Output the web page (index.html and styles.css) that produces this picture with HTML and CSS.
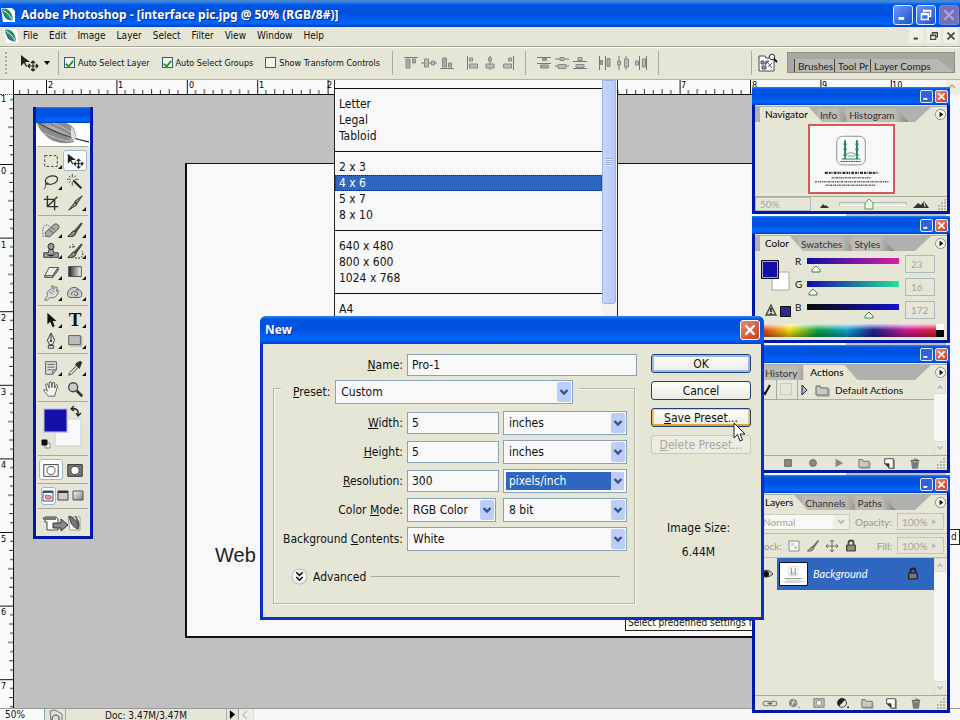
FILE: index.html
```html
<!DOCTYPE html>
<html lang="en">
<head>
<meta charset="utf-8">
<title>Adobe Photoshop</title>
<link rel="stylesheet" href="styles.css">
</head>
<body>
<svg class="defs" aria-hidden="true">
  <defs>
    <linearGradient id="gMetal" x1="0" y1="0" x2="1" y2="1"><stop offset="0" stop-color="#fff"/><stop offset="1" stop-color="#777"/></linearGradient>
    <linearGradient id="gBw"><stop offset="0" stop-color="#222"/><stop offset="1" stop-color="#fff"/></linearGradient>
    <symbol id="min" viewBox="0 0 14 14"><path d="M3 10h5" stroke="currentColor" stroke-width="2.4"/></symbol>
    <symbol id="max" viewBox="0 0 14 14"><path d="M5 5V3h6v5H9M5 3.4h6M3 6h6v5H3zM3 6.6h6" fill="none" stroke="currentColor" stroke-width="1.3"/></symbol>
    <symbol id="close" viewBox="0 0 14 14"><path d="M3 3l8 8M11 3l-8 8" stroke="currentColor" stroke-width="2"/></symbol>
    <symbol id="feather" viewBox="0 0 16 16"><path d="M1 1h11l3 3v11H3z" fill="#fff"/><path d="M2 2c6-2 11 4 11 12C7 13 3 8 2 2z" fill="#2a8d7c"/><path d="M2 2c1 5 4 9 9 11-6 0-8-5-9-11z" fill="#153f86"/><path d="M3 3c5 3 8 7 10 11" stroke="#d4f5cc" fill="none"/></symbol>
    <symbol id="move" viewBox="0 0 20 20"><path d="M2 2v11l3-3 2 4 1-1-2-4h5z" fill="#222"/><path d="M14 8v10M9 13h10M12 10l2-2 2 2M12 16l2 2 2-2M11 11l-2 2 2 2M17 11l2 2-2 2" stroke="#222" stroke-width="1.2" fill="none"/></symbol>
    <symbol id="brush" viewBox="0 0 20 20"><path d="M17 2l-8 9 2 2 7-10z" fill="#555" stroke="#222" stroke-width=".7"/><path d="M9 11c-3 0-3 4-7 6 4 1 9 0 9-4z" fill="#888" stroke="#222"/></symbol>
    <symbol id="folder" viewBox="0 0 16 14"><path d="M2 3h4l1 2h7v7H2z" fill="#c9c9c3" stroke="#666"/><path d="M3 13h12V6" stroke="#888" fill="none"/></symbol>
    <symbol id="newpage" viewBox="0 0 16 14"><path d="M3 2h10v11H8V8H3z" fill="#fff" stroke="#333"/><path d="M3 8h5v5z" fill="#333"/><path d="M14 3v11H9" stroke="#555" fill="none"/></symbol>
    <symbol id="trash" viewBox="0 0 16 14"><path d="M4 4h8l-1 9H5z" fill="#aaa" stroke="#555"/><path d="M3 4h10M7 2l4 1M6 6l1 6M8 6v6M10 6l-1 6" stroke="#555" fill="none"/></symbol>
    <symbol id="play" viewBox="0 0 14 14"><circle cx="7" cy="7" r="5.5" fill="#f4f4ee" stroke="#888"/><path d="M6 4l4 3-4 3z" fill="#111"/></symbol>
    <symbol id="up" viewBox="0 0 12 12"><path d="M3 8l3-3 3 3" fill="none" stroke="#b9b9b0" stroke-width="1.8"/></symbol>
    <symbol id="down" viewBox="0 0 12 12"><path d="M3 4l3 3 3-3" fill="none" stroke="#b9b9b0" stroke-width="1.8"/></symbol>
    <symbol id="grip" viewBox="0 0 12 12"><path d="M9 2h2M6 5h2M9 5h2M3 8h2M6 8h2M9 8h2M3 11h2M6 11h2M9 11h2" stroke="#aaa99b" stroke-width="1.5"/></symbol>
    <symbol id="lock" viewBox="0 0 12 14"><path d="M3.5 7V4a2.5 2.500 0 0 1 5 0v3" fill="none" stroke="#222" stroke-width="1.8"/><path d="M1.500 6h9v6h-9z" fill="#555" stroke="#222"/><path d="M3 8h6M3 10h6" stroke="#bbb" stroke-width=".7"/></symbol>
    <symbol id="mosque" viewBox="0 0 84 64">
      <rect x="27" y="9" width="29" height="29" rx="6" fill="none" stroke="#777" stroke-width=".8"/>
      <path d="M35.500 13v19M47.500 13v19" stroke="#2a8066" stroke-width="2"/><path d="M33.500 17h4M33.500 22h4M33.500 28h4M45.500 17h4M45.500 22h4M45.500 28h4M32 32h19" stroke="#2a8066"/>
      <path d="M35 31c1-7 12-7 13 0M38 29h7" fill="none" stroke="#69a18f"/><path d="M31 34.500h21" stroke="#444" stroke-dasharray="2 .6"/>
      <path d="M15 46h54" stroke="#333" stroke-width="2.4" stroke-dasharray="3 1 2 .7 1 1.200"/>
      <path d="M22 51h40M5 55h75M16 58.500h50" stroke="#666" stroke-width="1.4" stroke-dasharray="2 .8 1 .6"/>
    </symbol>
    <symbol id="al1" viewBox="0 0 16 14"><path d="M1 1.500h14" stroke="#777"/><path d="M3 3h4v9H3zM9.500 3h3v4h-3z" fill="#aaa" stroke="#888"/></symbol>
    <symbol id="al2" viewBox="0 0 16 14"><path d="M0 7h16" stroke="#777"/><path d="M3.500 3h4v8h-4zM10.500 5h3v4h-3z" fill="#bbb" stroke="#888"/></symbol>
    <symbol id="al3" viewBox="0 0 16 14"><path d="M1 12.500h14" stroke="#777"/><path d="M3.500 2h4v9h-4zM9.500 7h3v4h-3z" fill="#aaa" stroke="#888"/></symbol>
    <symbol id="al4" viewBox="0 0 16 14"><path d="M3.500 0v14" stroke="#777"/><path d="M5.500 2h3v3h-3zM5.500 8h8v4h-8z" fill="#bbb" stroke="#888"/></symbol>
    <symbol id="al5" viewBox="0 0 16 14"><path d="M8 0v14" stroke="#777"/><path d="M6.500 2h3v3h-3zM4 8h8v4H4z" fill="#bbb" stroke="#888"/></symbol>
    <symbol id="al6" viewBox="0 0 16 14"><path d="M13.500 0v14" stroke="#777"/><path d="M8.500 2h3v3h-3zM3.500 8h8v4h-8z" fill="#bbb" stroke="#888"/></symbol>
    <symbol id="di1" viewBox="0 0 16 14"><path d="M1 1.500h14M1 7.500h14" stroke="#777"/><path d="M6.500 2.500h4v2h-4zM4.500 9h8v3h-8z" fill="#aaa" stroke="#888"/></symbol>
    <symbol id="di2" viewBox="0 0 16 14"><path d="M1 3h14M1 10h14" stroke="#777"/><path d="M6 1.500h4v3H6zM4 8.500h8v4H4z" fill="#bbb" stroke="#888"/></symbol>
    <symbol id="di3" viewBox="0 0 16 14"><path d="M1 5.500h14M1 12.500h14" stroke="#777"/><path d="M6 1.500h4v3H6zM4 8.500h8v3H4z" fill="#bbb" stroke="#888"/></symbol>
  </defs>
</svg>

<header class="titlebar">
  <svg class="i16"><use href="#feather"/></svg>
  <h1>Adobe Photoshop - [interface pic.jpg @ 50% (RGB/8#)]</h1>
  <div class="winbtns">
    <button aria-label="Minimize"><svg><use href="#min"/></svg></button>
    <button aria-label="Restore"><svg><use href="#max"/></svg></button>
    <button class="off" aria-label="Close"><svg><use href="#close"/></svg></button>
  </div>
</header>

<nav class="menubar">
  <svg class="i16"><use href="#feather"/></svg>
  <a href="#">File</a><a href="#">Edit</a><a href="#">Image</a><a href="#">Layer</a><a href="#">Select</a><a href="#">Filter</a><a href="#">View</a><a href="#">Window</a><a href="#">Help</a>
  <div class="docbtns">
    <button aria-label="Minimize document"><svg><use href="#min"/></svg></button>
    <button aria-label="Restore document"><svg><use href="#max"/></svg></button>
    <button aria-label="Close document"><svg><use href="#close"/></svg></button>
  </div>
</nav>

<div class="options">
  <span class="handle"></span>
  <button class="current" aria-label="Move tool"><svg class="i20"><use href="#move"/></svg><svg class="caret" viewBox="0 0 6 4"><path d="M0 0h6L3 4z"/></svg></button>
  <div class="checks">
    <label><input type="checkbox" checked>Auto Select Layer</label>
    <label><input type="checkbox" checked>Auto Select Groups</label>
    <label><input type="checkbox">Show Transform Controls</label>
  </div>
  <div class="aligns">
    <span><svg><use href="#al1"/></svg><svg><use href="#al2"/></svg><svg><use href="#al3"/></svg></span>
    <span><svg><use href="#al4"/></svg><svg><use href="#al5"/></svg><svg><use href="#al6"/></svg></span>
  </div>
  <div class="aligns">
    <span><svg><use href="#di1"/></svg><svg><use href="#di2"/></svg><svg><use href="#di3"/></svg></span>
    <span class="turn"><svg><use href="#di1"/></svg><svg><use href="#di2"/></svg><svg><use href="#di3"/></svg></span>
  </div>
  <span class="rule"></span>
  <div class="well">
    <button aria-label="File browser"><svg class="i20" viewBox="0 0 20 20"><path d="M1 3h6l1 2h8v13H1z" fill="#fff" stroke="#444"/><path d="M3 8h3v3H3zM8 8h3l-4 4zM4 13h4v3H4zM10 14l4-4M10 10l4 5" fill="#999" stroke="#555"/><circle cx="14" cy="4" r="2.800" fill="#eee" stroke="#333"/><path d="M16 6l3 3" stroke="#111" stroke-width="2"/></svg></button>
    <div class="welltabs"><a href="#">Brushes</a><a href="#">Tool Pr</a><a href="#">Layer Comps</a></div>
  </div>
</div>

<main class="work">
  <div class="corner"></div>
  <svg class="hruler">
    <defs><pattern id="ph" x="32" width="70.400" height="14" patternUnits="userSpaceOnUse"><path d="M.5 0v14" stroke="#111"/><path d="M8.800 10v4M17.600 9v5M26.400 10v4M35.200 9v5M44 10v4M52.800 9v5M61.600 10v4" stroke="#333"/></pattern></defs>
    <rect width="100%" height="14" fill="url(#ph)"/>
    <g><text x="34" y="8">2</text><text x="104" y="8">1</text><text x="175" y="8">0</text><text x="245" y="8">1</text><text x="313" y="8">2</text><text x="667" y="8">7</text><text x="738" y="8">8</text><text x="808" y="8">9</text><text x="878" y="8">10</text></g>
  </svg>
  <div class="scrollcap"><svg class="i12"><use href="#up"/></svg></div>
  <svg class="vruler">
    <defs><pattern id="pv" y="69" width="13" height="73.600" patternUnits="userSpaceOnUse"><path d="M0 .5h13" stroke="#111"/><path d="M10 9.200h3M9 18.400h4M10 27.600h3M8 36.800h5M10 46h3M9 55.200h4M10 64.400h3" stroke="#333"/></pattern></defs>
    <rect width="13" height="100%" fill="url(#pv)"/>
    <g><text x="1" y="7">1</text><text x="1" y="79">0</text><text x="1" y="153">1</text><text x="1" y="226">2</text><text x="1" y="300">3</text><text x="1" y="373">4</text><text x="1" y="447">5</text><text x="1" y="520">6</text><text x="1" y="594">7</text></g>
  </svg>
  <div class="canvas"><div class="sheet"><p>Web</p></div></div>
  <div class="vtrack"></div>
</main>

<footer class="status">
  <input aria-label="Zoom" value="50%">
  <span class="st-ico"><svg class="i14" viewBox="0 0 14 14"><path d="M1 2l5-1 7 4v8H2z" fill="#ddd" stroke="#777"/><path d="M3 11c0-6 5-6 7-3v4" fill="none" stroke="#444"/></svg></span>
  <span class="st-doc">Doc: 3.47M/3.47M</span>
  <button class="st-btn" aria-label="Status menu"><svg viewBox="0 0 8 10"><path d="M1 0l6 5-6 5z"/></svg></button>
  <span class="st-left"><svg class="i12" viewBox="0 0 12 12"><path d="M8 2L4 6l4 4" fill="none" stroke="#c3c3bb" stroke-width="1.600"/></svg></span>
</footer>

<aside class="toolbox" aria-label="Tools">
  <div class="bar"></div>
  <svg class="plume" viewBox="0 0 54 23"><path d="M1 0h29c6 2 9 6 10 12l-2 7c-11 3-22 0-28-6C6 9 2 5 1 0z" fill="#8c8c8c"/><path d="M4 1c12 4 22 8 32 16M10 1c9 4 18 8 27 14M17 0c8 3 14 6 21 12M8 10c9 4 18 8 28 8" stroke="#c4c4c4" fill="none"/><path d="M3 0c13 9 28 14 50 19" stroke="#444" fill="none" stroke-width="1.300"/><path d="M35 4c4 3 6 10 3 15l-3-5z" fill="#ddd"/></svg>
  <div class="tools">
    <button class="more" aria-label="Marquee"><svg viewBox="0 0 20 20"><path d="M3 4h14v12H3z" fill="none" stroke="#333" stroke-dasharray="3 2"/></svg></button>
    <button class="on" aria-label="Move"><svg><use href="#move"/></svg></button>
    <button class="more" aria-label="Lasso"><svg viewBox="0 0 20 20"><ellipse cx="10.500" cy="8" rx="7" ry="4.500" transform="rotate(-15 10 8)" fill="none" stroke="#333" stroke-width="1.300"/><path d="M5 10c-3 2 1 4 2 2s-4-1-3 2c0 2-1 3-2 4" fill="none" stroke="#333"/></svg></button>
    <button aria-label="Magic wand"><svg viewBox="0 0 20 20"><path d="M8 8l9 9" stroke="#222" stroke-width="2.200"/><path d="M7 1v4M7 10v4M1 7h4M10 7h4M3 3l2 2M11 3L9 5M3 11l2-2" stroke="#444"/></svg></button>
    <button aria-label="Crop"><svg viewBox="0 0 20 20"><path d="M6 2v12h12M2 6h12v12M14 6L6 14M14 6l3-3" fill="none" stroke="#333" stroke-width="1.600"/></svg></button>
    <button class="more" aria-label="Slice"><svg viewBox="0 0 20 20"><path d="M18 2l-8 6 2 3zM10 9l2 3-9 6z" fill="#999" stroke="#222"/></svg></button>
  </div>
  <div class="tools">
    <button class="more" aria-label="Healing brush"><svg viewBox="0 0 20 20"><path d="M1 9c0-5 6-6 7-3M1 10v7h5" fill="none" stroke="#444" stroke-dasharray="1.500 1.500"/><rect x="2" y="7" width="18" height="7" rx="3.500" transform="rotate(-42 11 10)" fill="#aaa" stroke="#555"/><path d="M8 10l4 3M11 7l3 3" stroke="#555"/></svg></button>
    <button class="more" aria-label="Brush"><svg><use href="#brush"/></svg></button>
    <button class="more" aria-label="Clone stamp"><svg viewBox="0 0 20 20"><path d="M8 8h4l1 4h5v5H2v-5h5z" fill="#aaa" stroke="#222"/><circle cx="10" cy="5" r="3.400" fill="#999" stroke="#222"/><path d="M4 14h12l-6 2z" fill="#222"/></svg></button>
    <button class="more" aria-label="History brush"><svg><use href="#brush"/><path d="M3 5h6l-3-3M9 16h5c4-2 3-6 2-7" fill="none" stroke="#333" stroke-dasharray="2 1"/></svg></button>
    <button class="more" aria-label="Eraser"><svg viewBox="0 0 20 20"><path d="M8 5h10l-6 9H3z" fill="#eee" stroke="#444"/><path d="M3 14v2h9v-2l6-9v3l-6 8" fill="#aaa" stroke="#444"/></svg></button>
    <button class="more" aria-label="Gradient"><svg viewBox="0 0 20 20"><path d="M3 4h14v11H3z" fill="url(#gBw)" stroke="#444"/></svg></button>
    <button class="more" aria-label="Smudge"><svg viewBox="0 0 20 20"><path d="M3 18l3-5c-1-3 0-5 2-6l3-2V2l2 .5V6l2-3 2 1-1 4 2-1v3l-2 3c-1 2-4 3-7 2l-3 3z" fill="#ddd" stroke="#666"/><path d="M8 9l4 2M11 7l3 2" stroke="#777"/></svg></button>
    <button class="more" aria-label="Sponge"><svg viewBox="0 0 20 20"><path d="M2 9c2-6 10-7 13-2 4 1 3 8 0 8H5c-3 0-4-3-3-6z" fill="#ccc" stroke="#555"/><path d="M6 12c0-5 7-5 7-1s-6 1-3 0M14 7l-3-1" fill="none" stroke="#555"/></svg></button>
  </div>
  <div class="tools">
    <button class="more" aria-label="Path selection"><svg viewBox="0 0 20 20"><path d="M6 2v13l3-3 3 6 2-1-2-6h4z" fill="#111"/></svg></button>
    <button class="more type" aria-label="Type">T</button>
    <button class="more" aria-label="Pen"><svg viewBox="0 0 20 20"><path d="M10 1l4 8-2 5H8L6 9zM7 15h6v3H7z" fill="#ddd" stroke="#333"/><path d="M10 2v7" stroke="#333"/><circle cx="10" cy="10" r="1.200" fill="#222"/></svg></button>
    <button class="more" aria-label="Rectangle"><svg viewBox="0 0 20 20"><path d="M3 4h13v10H3z" fill="#bbb" stroke="#555"/><path d="M4 15.500h13.500V5" fill="none" stroke="#999"/></svg></button>
  </div>
  <div class="tools">
    <button class="more" aria-label="Notes"><svg viewBox="0 0 20 20"><path d="M4 3h12v9l-4 5H4z" fill="#ddd" stroke="#555"/><path d="M6 6h8M6 9h8M6 12h5M12 17v-5h4" fill="none" stroke="#555"/></svg></button>
    <button class="more" aria-label="Eyedropper"><svg viewBox="0 0 20 20"><path d="M3 18l1-3 8-8 2 2-8 8z" fill="#ddd" stroke="#444"/><path d="M10 6l5 5 1-2 2-5-2-2-4 2z" fill="#333"/></svg></button>
    <button aria-label="Hand"><svg viewBox="0 0 20 20"><path d="M7 18c-2-3-5-5-5-7l2-.5 2 2L4 5l2-1 2 5V2.500l2-.5 1 6.500 1-6 2 .5v6l2-4 1.500 1-2 7-1.500 5z" fill="#f2f2f2" stroke="#555"/></svg></button>
    <button aria-label="Zoom"><svg viewBox="0 0 20 20"><circle cx="8" cy="8" r="5" fill="#ccc" stroke="#444" stroke-width="1.500"/><path d="M12 12l6 6" stroke="#333" stroke-width="3"/></svg></button>
  </div>
  <div class="swatches">
    <svg viewBox="0 0 50 50"><path d="M17 17h26v27H17z" fill="#f8f8f8" stroke="#ccc"/><path d="M5 6h25v25H5z" fill="#c9c9f0"/><path d="M6.500 7.500h22v22h-22z" fill="#140fa6"/><path d="M34 7c4-1 7 1 6 6M36 4l-3 3 3 2M38 11l2 3 3-3" fill="none" stroke="#222" stroke-width="1.300"/><path d="M7 41h5v5H7z" fill="#fff" stroke="#888"/><path d="M4 38h5v5H4z" fill="#111" stroke="#111"/></svg>
  </div>
  <div class="tools modes">
    <button class="on" aria-label="Standard mode"><svg viewBox="0 0 20 20"><path d="M2 4h16v13H2z" fill="#fff" stroke="#333"/><circle cx="10" cy="10.500" r="4.500" fill="#fff" stroke="#444"/></svg></button>
    <button aria-label="Quick mask mode"><svg viewBox="0 0 20 20"><path d="M2 4h16v13H2z" fill="#777" stroke="#222"/><circle cx="10" cy="10.500" r="4.500" fill="#fff" stroke="#444"/></svg></button>
  </div>
  <div class="tools screens">
    <button class="on" aria-label="Standard screen"><svg viewBox="0 0 14 14"><path d="M2 2h10v10H2z" fill="#fff" stroke="#357"/><path d="M2 3h10" stroke="#357" stroke-width="2"/><path d="M4 6l6 1v3H5z" fill="#e99" stroke="#a66"/></svg></button>
    <button aria-label="Full screen with menu"><svg viewBox="0 0 14 14"><path d="M2 2h10v9H2z" fill="#ccc" stroke="#444"/><path d="M2 3h10" stroke="#333" stroke-width="2"/></svg></button>
    <button aria-label="Full screen"><svg viewBox="0 0 14 14"><path d="M2 2h10v9H2z" fill="url(#gMetal)" stroke="#555"/></svg></button>
  </div>
  <button class="jump" aria-label="Edit in ImageReady"><svg viewBox="0 0 42 18"><path d="M3 3h11l2 2v11H5V8H3z" fill="#fff" stroke="#444"/><path d="M1 3h13v3H1z" fill="#777"/><path d="M11 9h8V5l7 6-7 6v-3h-8z" fill="#888" stroke="#333"/><path d="M26 3h12v13H28z" fill="#fff" stroke="#999"/><path d="M27 2c6 2 10 7 9 13-6-2-8-7-9-13zM33 2c4 4 5 9 3 13" fill="#777" stroke="#444"/></svg></button>
</aside>

<div class="palettes">
  <section class="pal nav">
    <div class="bar"><button aria-label="Minimize"><svg><use href="#min"/></svg></button><button class="red" aria-label="Close"><svg><use href="#close"/></svg></button></div>
    <div class="tabs"><a class="act" href="#">Navigator</a><a href="#">Info</a><a href="#">Histogram</a><i class="ear"><svg><use href="#play"/></svg></i></div>
    <div class="navview"><svg viewBox="0 0 84 64"><use href="#mosque"/></svg></div>
    <div class="navfoot"><input aria-label="Navigator zoom" value="50%">
      <svg class="hills" viewBox="0 0 16 10"><path d="M3 9l3-4 2 2 1-1 3 3z" fill="#333"/></svg>
      <span class="track"><svg viewBox="0 0 10 12"><path d="M1 11V5l4-4 4 4v6z" fill="#eef7ea" stroke="#5a9468"/></svg></span>
      <svg class="hills" viewBox="0 0 16 10"><path d="M0 9l5-5 3 2 3-4 5 7z" fill="#333"/><path d="M11 3l1 5" stroke="#eee"/></svg>
      <svg class="i12"><use href="#grip"/></svg></div>
  </section>

  <section class="pal color">
    <div class="bar"><button aria-label="Minimize"><svg><use href="#min"/></svg></button><button class="red" aria-label="Close"><svg><use href="#close"/></svg></button></div>
    <div class="tabs"><a class="act" href="#">Color</a><a href="#">Swatches</a><a href="#">Styles</a><i class="ear"><svg><use href="#play"/></svg></i></div>
    <div class="colorbody">
      <svg class="chips" viewBox="0 0 40 66"><path d="M17 17h17v18H17z" fill="#fff" stroke="#aaa"/><path d="M6.500 5.500h17v18h-17z" fill="#140fa6" stroke="#111"/><path d="M7.500 6.500h15v16h-15z" fill="none" stroke="#aab"/><path d="M16 50l5 10H11z" fill="#ccc" stroke="#444" stroke-width="1.300"/><path d="M16 53v4M16 58v1.500" stroke="#111" stroke-width="1.500"/><path d="M25.500 51.500h10v10h-10z" fill="#2c2c86" stroke="#111"/></svg>
      <div class="sliders">
        <label>R<span class="ramp r"><svg viewBox="0 0 10 8"><path d="M1 7V5l4-4 4 4v2z" fill="#fff" stroke="#3a7d4a"/></svg></span><input value="23"></label>
        <label>G<span class="ramp g"><svg viewBox="0 0 10 8"><path d="M1 7V5l4-4 4 4v2z" fill="#fff" stroke="#3a7d4a"/></svg></span><input value="16"></label>
        <label>B<span class="ramp b"><svg viewBox="0 0 10 8"><path d="M1 7V5l4-4 4 4v2z" fill="#fff" stroke="#3a7d4a"/></svg></span><input value="172"></label>
      </div>
    </div>
    <div class="spectrum"><i></i></div>
  </section>

  <section class="pal actions">
    <div class="bar"><button aria-label="Minimize"><svg><use href="#min"/></svg></button><button class="red" aria-label="Close"><svg><use href="#close"/></svg></button></div>
    <div class="tabs"><a href="#">History</a><a class="act" href="#">Actions</a><i class="ear"><svg><use href="#play"/></svg></i></div>
    <div class="scrollbox">
      <div class="actrow">
        <span class="tick"><svg class="i14" viewBox="0 0 14 14"><path d="M3 7l3 4 5-9" fill="none" stroke="#111" stroke-width="2"/></svg></span>
        <span class="box"><i></i></span>
        <svg class="tri" viewBox="0 0 8 12"><path d="M1 1l5 5-5 5z" fill="#b3b3e8" stroke="#223"/></svg>
        <svg class="i16"><use href="#folder"/></svg><span>Default Actions</span>
      </div>
      <div class="sb"><svg><use href="#up"/></svg><svg><use href="#down"/></svg></div>
    </div>
    <div class="palfoot six">
      <svg viewBox="0 0 14 14"><path d="M3 3h8v8H3z" fill="#888" stroke="#666"/></svg><svg viewBox="0 0 14 14"><circle cx="7" cy="7" r="4" fill="#888" stroke="#666"/></svg><svg viewBox="0 0 14 14"><path d="M3 2l9 5-9 5z" fill="#888"/></svg><svg><use href="#folder"/></svg><svg><use href="#newpage"/></svg><svg><use href="#trash"/></svg><svg class="i12"><use href="#grip"/></svg>
    </div>
  </section>

  <section class="pal layers">
    <div class="bar"><button aria-label="Minimize"><svg><use href="#min"/></svg></button><button class="red" aria-label="Close"><svg><use href="#close"/></svg></button></div>
    <div class="tabs"><a class="act" href="#">Layers</a><a href="#">Channels</a><a href="#">Paths</a><i class="ear"><svg><use href="#play"/></svg></i></div>
    <div class="layrow"><select aria-label="Blend mode" disabled><option>Normal</option></select><label for="opacity">Opacity:</label><span class="pct"><input id="opacity" value="100%"><b></b></span></div>
    <div class="layrow"><span>Lock:</span>
      <svg class="i14" viewBox="0 0 14 14"><path d="M2 2h10v10H2z" fill="#fff" stroke="#777"/><path d="M4 4h3v3H4zM7 7h3v3H7z" fill="#ccc"/></svg>
      <svg class="i14"><use href="#brush"/></svg>
      <svg class="i14" viewBox="0 0 14 14"><path d="M7 1v12M1 7h12M5 3l2-2 2 2M5 11l2 2 2-2M3 5L1 7l2 2M11 5l2 2-2 2" fill="none" stroke="#555"/></svg>
      <svg class="i14"><use href="#lock"/></svg>
      <label for="fill">Fill:</label><span class="pct"><input id="fill" value="100%"><b></b></span></div>
    <div class="scrollbox">
      <div class="layer"><span class="eye"><svg class="i14" viewBox="0 0 14 14"><path d="M0 7c4-5 10-5 14 0-4 4-10 4-14 0z" fill="#ccc" stroke="#333"/><circle cx="7" cy="7" r="3" fill="#111"/></svg></span><svg class="thumb" viewBox="0 0 84 64"><use href="#mosque"/></svg><em>Background</em><svg class="i14"><use href="#lock"/></svg></div>
      <div class="sb"><svg><use href="#up"/></svg><svg><use href="#down"/></svg></div>
    </div>
    <div class="palfoot">
      <svg viewBox="0 0 16 14"><rect x="0" y="5" width="8" height="5" rx="2.500" fill="none" stroke="#888" stroke-width="1.500"/><rect x="8" y="5" width="8" height="5" rx="2.500" fill="none" stroke="#888" stroke-width="1.500"/><path d="M5 7.500h6" stroke="#555"/></svg>
      <svg viewBox="0 0 16 14"><circle cx="7" cy="7" r="5" fill="#888"/><path d="M9 3c-3 0-2 8-5 8M5 6.500h5" stroke="#eee" fill="none"/><path d="M13 12h2" stroke="#777"/></svg>
      <svg viewBox="0 0 16 14"><path d="M2 2h12v10H2z" fill="#bbb" stroke="#777"/><circle cx="8" cy="7" r="3" fill="#fff" stroke="#888"/></svg>
      <svg viewBox="0 0 16 14"><circle cx="7" cy="7" r="5" fill="#eee" stroke="#222"/><path d="M3 11A5.500 5.500 0 0 1 11 3z" fill="#222"/><path d="M13 12h2" stroke="#222" stroke-width="2"/></svg>
      <svg><use href="#folder"/></svg><svg><use href="#newpage"/></svg><svg><use href="#trash"/></svg><svg class="i12"><use href="#grip"/></svg>
    </div>
  </section>
</div>

<div class="tip tip-preset">Select predefined settings f</div>
<div class="tip tip-edge">d</div>

<div class="droplist" role="listbox" aria-label="Preset sizes">
  <ul>
    <li class="sep"></li><li>Letter</li><li>Legal</li><li>Tabloid</li>
    <li class="sep"></li><li>2 x 3</li><li class="sel">4 x 6</li><li>5 x 7</li><li>8 x 10</li>
    <li class="sep"></li><li>640 x 480</li><li>800 x 600</li><li>1024 x 768</li>
    <li class="sep"></li><li>A4</li>
  </ul>
  <div class="dropbar"><i></i></div>
</div>

<form class="dialog" aria-label="New">
  <div class="dlgbar"><h2>New</h2><button type="button" class="red" aria-label="Close"><svg><use href="#close"/></svg></button></div>
  <div class="dlgbody">
    <div class="dlgform">
      <div class="name"><label for="name"><u>N</u>ame:</label><input id="name" value="Pro-1"></div>
      <div class="group">
        <div class="preset"><label for="preset"><u>P</u>reset:</label><select id="preset"><option>Custom</option></select></div>
        <div class="grid">
          <label for="w"><u>W</u>idth:</label><input id="w" value="5"><select aria-label="Width unit"><option>inches</option></select>
          <label for="h"><u>H</u>eight:</label><input id="h" value="5"><select aria-label="Height unit"><option>inches</option></select>
          <label for="res"><u>R</u>esolution:</label><input id="res" value="300"><select class="focus" aria-label="Resolution unit"><option>pixels/inch</option></select>
          <label for="mode">Color <u>M</u>ode:</label><select id="mode" class="narrow"><option>RGB Color</option></select><select aria-label="Bit depth"><option>8 bit</option></select>
          <label for="bg">Background <u>C</u>ontents:</label><select id="bg" class="wide"><option>White</option></select>
        </div>
        <div class="adv"><button type="button" aria-label="Show advanced"><svg viewBox="0 0 16 16"><circle cx="8" cy="8" r="7" fill="#f6f6f6" stroke="#bbb"/><path d="M5 4l3 3 3-3M5 8.500l3 3 3-3" fill="none" stroke="#111" stroke-width="1.500"/></svg></button><span>Advanced</span><hr></div>
      </div>
    </div>
    <div class="dlgside">
      <button type="button" class="btn default">OK</button>
      <button type="button" class="btn">Cancel</button>
      <button type="button" class="btn hot"><u>S</u>ave Preset...</button>
      <button type="button" class="btn" disabled><u>D</u>elete Preset...</button>
      <p>Image Size:</p><p>6.44M</p>
    </div>
  </div>
</form>

<svg class="pointer" viewBox="0 0 12 20"><path d="M1 1v15l3.500-3.500L7 19l2.500-1L7 12h5z" fill="#fff" stroke="#222"/></svg>
</body>
</html>
```
FILE: styles.css
```css
* { box-sizing: border-box; }
:root {
  --cream: #e6e6d6;
  --ui: "DejaVu Sans Condensed", "DejaVu Sans", sans-serif;
  --small: Lato, "Open Sans", sans-serif;
  --blue: linear-gradient(#2a86f5 0, #0054e3 12%, #0050dc 45%, #0066ff 85%, #0040c0 100%);
}
body {
  margin: 0;
  height: 100vh;
  display: flex;
  flex-direction: column;
  overflow: hidden;
  position: relative;
  background: var(--cream);
  font: 11px/16px var(--ui);
  color: #111;
}
button, input, select { font: inherit; color: inherit; margin: 0; padding: 0; border: 0; background: none; border-radius: 0; }
button { display: flex; align-items: center; justify-content: center; }
a { color: inherit; text-decoration: none; }
svg { display: block; flex: none; overflow: visible; }
h1, h2, p, ul { margin: 0; padding: 0; }
li { list-style: none; }
.defs { position: absolute; width: 0; height: 0; }
.i12 { width: 12px; height: 12px; }
.i14 { width: 14px; height: 14px; }
.i16 { width: 16px; height: 16px; }
.i20 { width: 20px; height: 20px; }

.titlebar {
  flex: none; height: 27px; display: flex; align-items: center; gap: 5px;
  background: var(--blue); border-top: 2px solid #4b86c6; color: #fff;
}
.titlebar h1 { font: bold 12px/20px "Noto Sans", sans-serif; text-shadow: 1px 1px #0a2a8a; flex: 1; white-space: nowrap; }
.winbtns { display: flex; gap: 3px; padding-right: 1px; }
.winbtns button { width: 20px; height: 20px; border: 1px solid #dfe8ff; border-radius: 3px; background: linear-gradient(135deg, #6d98f5, #1c50d8); }
.winbtns .off { background: #7470b8; border-color: #7d86d0; color: #aaa3d8; }
.winbtns svg { width: 16px; height: 16px; }

.menubar { flex: none; height: 20px; display: flex; align-items: center; gap: 11px; padding: 0 0 2px 3px; border-bottom: 1px solid #a9a99c; font-size: 10px; }
.menubar .i16 { margin-right: -7px; }
.docbtns { margin-left: auto; display: flex; gap: 2px; padding-right: 2px; color: #444; }
.docbtns button { width: 15px; height: 15px; background: #efefe4; }
.docbtns svg { width: 12px; height: 12px; }

.options { flex: none; height: 33px; display: flex; align-items: center; padding-bottom: 2px; border-top: 1px solid #fafaf2; border-bottom: 1px solid #b5b5a8; font: 9px/14px var(--ui); }
.handle { width: 2px; height: 22px; margin-left: 5px; border-left: 2px dotted #aaa; }
.current { gap: 5px; margin-left: 12px; }
.caret { width: 6px; height: 4px; }
.checks, .aligns { display: flex; align-items: center; height: 24px; border-left: 1px solid #a9a99c; }
.checks { margin-left: 8px; padding: 0 12px 0 5px; gap: 12px; }
.checks label { display: flex; align-items: center; gap: 3px; white-space: nowrap; }
.checks input { appearance: none; width: 11px; height: 11px; border: 1px solid #2f5f85; background: #f6f6f2; display: grid; place-items: center; }
.checks input:checked::after { content: ""; width: 3px; height: 6px; border: solid #22a022; border-width: 0 2px 2px 0; transform: rotate(40deg); }
.aligns { gap: 9px; padding: 0 9px 0 10px; }
.aligns span { display: flex; gap: 2px; }
.aligns svg { width: 16px; height: 14px; }
.aligns .turn svg { transform: rotate(-90deg); }
.rule { height: 24px; border-left: 1px solid #a9a99c; }
.well { margin-left: auto; height: 24px; display: flex; align-items: center; gap: 9px; padding: 0 5px 0 6px; border-left: 1px solid #a9a99c; }
.welltabs { width: 168px; height: 21px; padding: 6px 0 0 6px; display: flex; background: #a8a8a2; border: 1px solid #8f8f88; color: #222; font: 10px/14px var(--small); }
.welltabs a { border-left: 1px solid #444; padding-left: 3px; width: 40px; white-space: nowrap; background: #b9b9b2; }
.welltabs a:nth-child(2) { width: 36px; }
.welltabs a:last-child { width: 84px; clip-path: polygon(0 0, 80% 0, 100% 100%, 0 100%); }

.work { flex: 1; min-height: 0; display: grid; grid-template: 15px 1fr / 14px 1fr 14px; background: #fafafa; }
.corner { border-right: 1px solid #111; border-bottom: 1px dotted #444; }
.hruler, .vruler { width: 100%; height: 100%; overflow: hidden; background: #fafafa; font: 9px var(--ui); }
.hruler { border-bottom: 1px solid #111; }
.vruler { border-right: 1px solid #111; }
.scrollcap { background: #eeeee6; }
.canvas { position: relative; background: #c0c0c0; min-height: 0; overflow: hidden; }
.sheet { position: absolute; left: 171px; top: 68px; right: 100px; height: 475px; background: #f8f8f8; border: 2px solid #111; border-width: 1px 0 2px 2px; }
.sheet p { font: 20px/26px "Liberation Sans", sans-serif; color: #222; margin: 378px 0 0 28px; }
.vtrack { background: #f9f9f7; }

.status { flex: none; height: 12px; display: flex; font: 10px/13px var(--ui); border-top: 1px solid #999; background: #f7f7f5; }
.status > * { height: 11px; flex: none; }
.status input { width: 45px; padding-left: 5px; background: #fafafa; border-right: 1px solid #8aa; }
.st-ico { width: 21px; padding-left: 4px; background: var(--cream); border-right: 1px solid #aaa; }
.st-doc { width: 160px; text-align: center; background: var(--cream); }
.st-btn { width: 13px; border: solid #aaa; border-width: 0 1px; background: var(--cream); }
.st-btn svg { width: 7px; height: 9px; }
.st-left { width: 15px; background: #eeeee8; border-right: 1px solid #ddd; }

.toolbox { position: absolute; left: 33px; top: 107px; width: 60px; border: 3px solid #0019a8; border-top: 0; background: var(--cream); }
.toolbox .bar { height: 16px; background: var(--blue); }
.plume { width: 54px; height: 23px; background: #fff; }
.tools { display: grid; grid-template-columns: 24px 24px; justify-content: center; border-top: 1px solid #aaa99b; margin: 0 2px; padding: 3px 0 2px; }
.tools button { height: 21px; position: relative; }
.tools svg { width: 18px; height: 18px; }
.tools .on { background: #fcfcfc; border: 1px solid #9db8cc; border-radius: 3px; }
.tools .more::after { content: ""; position: absolute; right: 1px; bottom: 2px; border: 2px solid #111; border-top-color: transparent; border-left-color: transparent; }
.tools .type { font: bold 19px/20px "Liberation Serif", serif; }
.swatches { border-top: 1px solid #aaa99b; margin: 0 2px; height: 54px; }
.swatches svg { width: 50px; height: 50px; }
.modes { padding: 3px 0; }
.screens { grid-template-columns: repeat(3, 15px); padding: 3px 0; }
.screens button { height: 18px; }
.screens svg { width: 14px; height: 14px; }
.jump { width: 50px; height: 28px; margin: 0 2px; border-top: 1px solid #aaa99b; }
.jump svg { width: 42px; height: 18px; }

.palettes { position: absolute; right: 10px; top: 87px; width: 198px; display: flex; flex-direction: column; gap: 2px; font: 10px/14px var(--small); }
.pal { display: flex; flex-direction: column; border: 3px solid #0019a8; border-top: 0; background: var(--cream); }
.nav, .color, .actions { height: 127px; }
.actions { height: 128px; }
.layers { height: 238px; }
.pal .bar { flex: none; height: 18px; display: flex; justify-content: flex-end; align-items: center; gap: 2px; background: var(--blue); margin: 0 -3px; padding-right: 2px; color: #fff; }
.pal .bar button { width: 13px; height: 13px; border: 1px solid #dfe8ff; border-radius: 2px; background: #2d62dc; }
.pal .bar svg { width: 11px; height: 11px; }
.pal .bar .red, .red { background: linear-gradient(135deg, #f0876a, #cf3a1c); }
.tabs { flex: none; height: 16px; display: flex; align-items: flex-end; background: #b0b0ae; padding-left: 5px; margin-top: 1px; }
.tabs a { height: 14px; padding: 0 14px 0 3px; margin-left: -5px; color: #333; white-space: nowrap; background: linear-gradient(90deg, #bcbcb6 calc(100% - 14px), #85857f 100%); clip-path: polygon(0 0, calc(100% - 13px) 0, 100% 100%, 0 100%); }
.tabs .act { height: 15px; margin-left: 0; padding: 0 14px 0 5px; background: var(--cream); color: #000; z-index: 1; }
.actions .tabs { padding-left: 12px; }
.actions .tabs .act { margin-left: -8px; padding-left: 7px; }
.tabs .ear { margin-left: auto; width: 32px; height: 15px; background: var(--cream); clip-path: polygon(50% 0, 100% 0, 100% 100%, 0 100%); display: flex; justify-content: flex-end; align-items: center; }
.ear svg { width: 13px; height: 13px; }
.pal input { color: #a5a598; border: 1px solid #a9b9bd; }
.navview { flex: 1; display: grid; place-items: center; }
.navview svg { width: 87px; height: 70px; border: 2px solid #d45a5a; background: #f8f8f8; }
.navfoot { height: 15px; display: flex; align-items: center; gap: 6px; border-top: 1px solid #a9a99c; }
.navfoot input { width: 56px; height: 14px; padding-left: 4px; }
.hills { width: 16px; height: 10px; }
.track { flex: 1; height: 4px; border: 1px solid #bbb; border-bottom-color: #fff; display: flex; justify-content: center; align-items: center; }
.track svg { width: 10px; height: 12px; margin-left: -8px; }
.colorbody { display: flex; flex: 1; padding-top: 4px; }
.chips { width: 40px; height: 66px; }
.sliders { flex: 1; padding-right: 12px; }
.sliders label { display: grid; grid-template-columns: 6px 1fr 30px; column-gap: 6px; height: 23px; align-items: start; font: 10px/12px var(--small); }
.sliders input { width: 30px; height: 18px; padding-left: 5px; }
.ramp { height: 6px; margin-top: 3px; }
.ramp svg { width: 10px; height: 8px; margin-top: 7px; margin-left: 4%; }
.r { background: linear-gradient(90deg, #0a10a8, #d820a0); }
.g { background: linear-gradient(90deg, #1408a8, #28e098); }
.g svg { margin-left: 1%; }
.b { background: linear-gradient(90deg, #0a0a08, #1512d0); }
.b svg { margin-left: 62%; }
.spectrum { height: 13px; margin: 0 3px 3px; background: linear-gradient(rgba(255,255,255,.8), transparent 45%, rgba(0,0,0,.35)), linear-gradient(90deg, #e02020, #f0e010 17%, #10a040 32%, #10a0d0 48%, #1a2090 62%, #d01890 80%, #e02020); display: flex; justify-content: flex-end; }
.spectrum i { width: 8px; background: linear-gradient(#fff 50%, #000 50%); }
.scrollbox { flex: 1; display: flex; min-height: 0; }
.scrollbox > :first-child { flex: 1; }
.sb { width: 13px; background: #f6f6f4; display: flex; flex-direction: column; justify-content: space-between; }
.sb svg { width: 12px; height: 14px; background: #e9e9e1; border: 1px solid #dcdcd4; }
.actrow { height: 20px; display: flex; align-items: center; border-bottom: 1px solid #a9a99c; gap: 5px; }
.tick { width: 21px; padding-left: 4px; margin-right: -5px; }
.box { width: 22px; height: 20px; border: solid #a9a99c; border-width: 0 1px; padding: 3px; margin-right: -2px; }
.box i { display: block; width: 12px; height: 12px; border: 1px solid #ccccbc; }
.tri { width: 8px; height: 12px; }
.palfoot { flex: none; height: 15px; display: flex; align-items: center; justify-content: space-between; border-top: 1px solid #a9a99c; padding-left: 8px; }
.six { padding-left: 26px; }
.palfoot svg { width: 14px; height: 12px; }
.layrow { flex: none; height: 24px; display: flex; align-items: center; padding: 0 3px 0 4px; gap: 5px; border-bottom: 1px solid #bdbdae; color: #98988c; }
.layrow select { appearance: none; width: 91px; height: 16px; border: 1px solid #ccccc0; padding-left: 3px; background: #f8f8f6; opacity: 1; color: #a5a598; background-image: url("data:image/svg+xml,%3Csvg xmlns='http://www.w3.org/2000/svg' width='16' height='14'%3E%3Crect width='16' height='14' fill='%23eeeee4'/%3E%3Cpath d='M5 5l3 3 3-3' fill='none' stroke='%23bbb' stroke-width='2'/%3E%3C/svg%3E"); background-repeat: no-repeat; background-position: right center; }
.layrow label { margin-left: auto; }
.layrow .i14 { opacity: .8; }
.pct { display: flex; align-items: center; width: 47px; height: 17px; border: 1px solid #c6c6b8; }
.pct input { width: 34px; border: 0; padding-left: 4px; }
.pct b { border: 3px solid transparent; border-left: 4px solid #bbb; }
.layer { height: 32px; display: flex; align-items: center; background: #2e66c0; color: #fff; font-size: 11px; padding-right: 14px; }
.eye { width: 22px; height: 32px; display: flex; align-items: center; padding-left: 4px; background: var(--cream); }
.thumb { width: 29px; height: 24px; margin: 0 5px 0 2px; background: #fff; border: 1px solid #111; }
.layer em { flex: 1; }

.tip { position: absolute; border: 1px solid #222; background: #fdfdf2; font: 10px/14px var(--ui); white-space: nowrap; padding: 0 2px; }
.tip-preset { left: 625px; top: 615px; width: 134px; height: 16px; }
.tip-edge { right: 0; top: 529px; width: 12px; height: 16px; }
.palettes { z-index: 2; }
.dialog { z-index: 3; }
.pointer { z-index: 4; position: absolute; left: 733px; top: 422px; width: 12px; height: 20px; }

.droplist { position: absolute; left: 334px; top: 80px; width: 284px; height: 240px; border: solid #222; border-width: 0 1px; background: #f8f8f8; display: flex; overflow: hidden; font: 12px/16px var(--ui); }
.droplist ul { flex: 1; padding-top: 1px; }
.droplist li { height: 16px; padding-left: 4px; }
.droplist .sep { height: 15px; padding: 0; display: flex; align-items: center; }
.droplist .sep::after { content: ""; flex: 1; border-top: 1px solid #111; }
.droplist .sel { background: #2e66c0; color: #fff; outline: 1px dotted #223; outline-offset: -1px; }
.dropbar { width: 15px; background: #f2f2f0; padding-right: 1px; }
.dropbar i { display: block; height: 224px; border: 1px solid #9ab3e8; border-radius: 0 0 3px 3px; background: repeating-linear-gradient(#96aee0 0 1px, #dfe7ff 1px 2px) center 77px / 7px 8px no-repeat, linear-gradient(90deg, #c9d7fd, #b6c8f8); }

.dialog { position: absolute; left: 260px; top: 316px; width: 504px; border: 3px solid #0830c8; border-top: 0; border-radius: 7px 7px 0 0; background: var(--cream); font: 12px/16px var(--ui); }
.dlgbar { height: 28px; margin: 0 -3px; display: flex; align-items: center; padding: 0 4px 0 5px; border-radius: 6px 6px 0 0; background: var(--blue); color: #fff; }
.dlgbar h2 { flex: 1; font: bold 12px/20px "Noto Sans", sans-serif; text-shadow: 1px 1px #0a2a8a; }
.dlgbar .red { width: 20px; height: 20px; border: 1px solid #fff; border-radius: 3px; }
.dlgbar svg { width: 16px; height: 16px; }
.dlgbody { display: flex; gap: 16px; padding: 10px 10px 13px; }
.dlgform { flex: 1; }
.dlgform input { width: 100%; height: 22px; border: 1px solid #8aa1b6; background: #f8f8f8; padding-left: 4px; }
.dlgform select { appearance: none; width: 100%; height: 24px; border: 1px solid #8aa1b6; padding-left: 5px; background: #f8f8f8 url("data:image/svg+xml,%3Csvg xmlns='http://www.w3.org/2000/svg' width='14' height='20'%3E%3Crect width='14' height='20' rx='2' fill='%23bccdf8'/%3E%3Cpath d='M3.500 8l3.500 3.500L10.500 8' fill='none' stroke='%23345488' stroke-width='2.400'/%3E%3C/svg%3E") no-repeat right 1px center; }
.dlgform label { text-align: right; white-space: nowrap; }
.name { display: grid; grid-template-columns: 130px 1fr; gap: 4px; align-items: center; margin-right: -2px; }
.group { border: 1px solid #b6b6a8; box-shadow: 1px 1px #f8f8f0, inset 1px 1px #f8f8f0; margin-top: 12px; height: 216px; padding-left: 7px; }
.preset { width: fit-content; display: flex; align-items: center; gap: 5px; margin-top: -9px; padding: 0 6px 0 12px; background: var(--cream); }
.preset select { width: 238px; }
.grid { display: grid; grid-template-columns: 122px 92px 124px; grid-auto-rows: 24px; gap: 5px 4px; margin-top: 7px; align-items: center; }
.dlgform .narrow { width: 89px; }
.wide { grid-column: span 2; }
.dlgform .focus { color: #fff; background-color: #2e66c0; outline: 2px solid #f8f8f8; outline-offset: -3px; }
.adv { display: flex; align-items: center; gap: 5px; margin: 17px 14px 0 10px; }
.adv svg { width: 17px; height: 17px; }
.adv hr { flex: 1; margin: 0; border: 0; border-top: 1px solid #a9a99c; }
.dlgside { width: 100px; text-align: center; }
.btn { width: 100%; height: 19px; margin-bottom: 8px; border: 1px solid #1c3f78; border-radius: 3px; background: linear-gradient(#fdfdfb, #ecece2); white-space: pre; }
.default { box-shadow: inset 0 0 0 2px #9bb8ea; }
.hot { box-shadow: inset 0 -2px #e8a030, inset 0 1px #f8d080, inset 2px 0 #f4c060, inset -2px 0 #f4c060; }
.btn:disabled { color: #a9a99c; border-color: #c9c9ba; background: #ecece0; }
.dlgside p { margin-top: 8px; padding-right: 5px; }
.dlgside .btn + p { margin-top: 66px; }
```
